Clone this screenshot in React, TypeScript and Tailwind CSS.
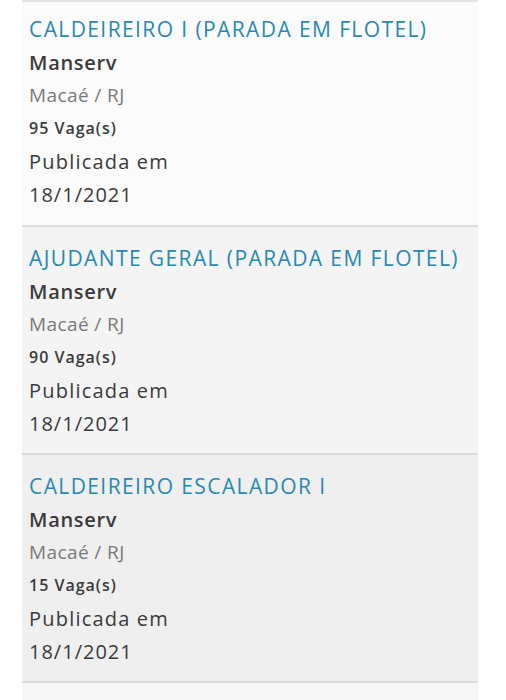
import React from "react";

const jobs = [
  { title: "CALDEIREIRO I (PARADA EM FLOTEL)", vagas: "95", bg: "bg-[#fbfbfb]", first: true },
  { title: "AJUDANTE GERAL (PARADA EM FLOTEL)", vagas: "90", bg: "bg-[#f4f4f4]", first: false },
  { title: "CALDEIREIRO ESCALADOR I", vagas: "15", bg: "bg-[#efefef]", first: false },
];

export default function App() {
  return (
    <div
      className="w-[506px] h-[700px] bg-white overflow-hidden"
      style={{ fontFamily: '"Open Sans", "Noto Sans", sans-serif' }}
    >
      <div className="ml-[22px] w-[456px] h-[700px] bg-[#f6f6f6] border-t-2 border-[#e3e3e3]">
        {jobs.map((j, i) => (
          <div
            key={i}
            className={`${j.bg} border-b-2 border-[#dcdcdc] px-[7px] ${j.first ? "pt-[11px] pb-[14px]" : "pt-[15px] pb-[13px]"}`}
          >
            <div className="h-[33px] leading-[33px] text-[21px] font-medium text-[#2889b0] tracking-[1.4px] whitespace-nowrap">
              {j.title}
            </div>
            <div className="h-[33px] leading-[33px] text-[20px] font-semibold text-[#3a3a3a] tracking-[0.7px]">Manserv</div>
            <div className="h-[33px] leading-[33px] text-[19px] text-[#7a7a7a] tracking-[0.4px]">Macaé / RJ</div>
            <div className="h-[33px] leading-[33px] text-[16px] font-semibold text-[#3a3a3a] tracking-[1px]">{j.vagas} Vaga(s)</div>
            <div className="h-[33px] leading-[33px] text-[20px] font-medium text-[#3a3a3a] tracking-[1.2px]">Publicada em</div>
            <div className="h-[33px] leading-[33px] text-[20px] font-medium text-[#3a3a3a] tracking-[1px]">18/1/2021</div>
          </div>
        ))}
      </div>
    </div>
  );
}
